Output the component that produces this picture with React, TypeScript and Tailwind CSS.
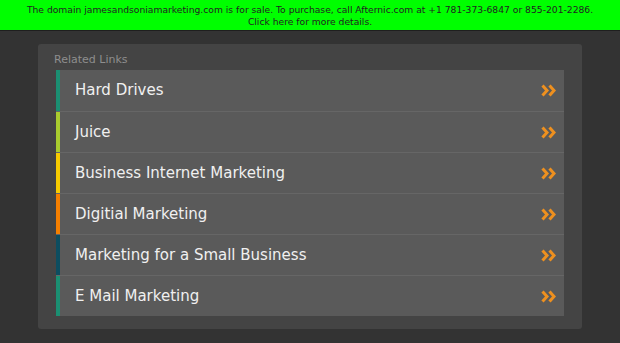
const links = [
  { text: "Hard Drives", color: "bg-[#1b8f72]" },
  { text: "Juice", color: "bg-[#a9cc2e]" },
  { text: "Business Internet Marketing", color: "bg-[#f7cb00]" },
  { text: "Digitial Marketing", color: "bg-[#f57f00]" },
  { text: "Marketing for a Small Business", color: "bg-[#0c4d60]" },
  { text: "E Mail Marketing", color: "bg-[#1b8f72]" },
];

const Chevrons = () => (
  <svg width="15" height="13" viewBox="0 0 15 13" fill="none">
    <path d="M1.5 1.5 L6 6.5 L1.5 11.5" stroke="#ee901f" strokeWidth="3" />
    <path d="M8.5 1.5 L13 6.5 L8.5 11.5" stroke="#ee901f" strokeWidth="3" />
  </svg>
);

const App = () => {
  return (
    <div className="w-[620px] h-[343px] bg-[#333333] font-['DejaVu_Sans',sans-serif] overflow-hidden">
      {/* sale banner */}
      <div className="h-[31px] bg-[#00ff00] border-b border-[#1f1f1f] pt-[4px] text-center text-[9.2px] leading-[12px] text-[#222]">
        <p>
          The domain jamesandsoniamarketing.com is for sale. To purchase, call
          Afternic.com at +1 781-373-6847 or 855-201-2286.
        </p>
        <p>Click here for more details.</p>
      </div>

      {/* related links */}
      <div className="mt-[13px] ml-[38px] w-[544px] bg-[#444444] rounded-[3px] px-[18px] pt-[9px] pb-[13px]">
        <p className="ml-[-2px] text-[11px] leading-[13px] text-[#8e8e8e]">Related Links</p>
        <ul className="mt-[4px]">
          {links.map((link, index) => (
            <li
              key={index}
              className={`flex h-[41px] bg-[#5a5a5a] ${
                index > 0 ? "border-t border-[#666666]" : ""
              }`}
            >
              <span className={`w-[4px] ${link.color}`} />
              <span className="flex-1 flex items-center pl-[15px] text-[15px] text-[#f0f0f0]">
                {link.text}
              </span>
              <span className="flex items-center pr-[8px]">
                <Chevrons />
              </span>
            </li>
          ))}
        </ul>
      </div>
    </div>
  );
};

export default App;
